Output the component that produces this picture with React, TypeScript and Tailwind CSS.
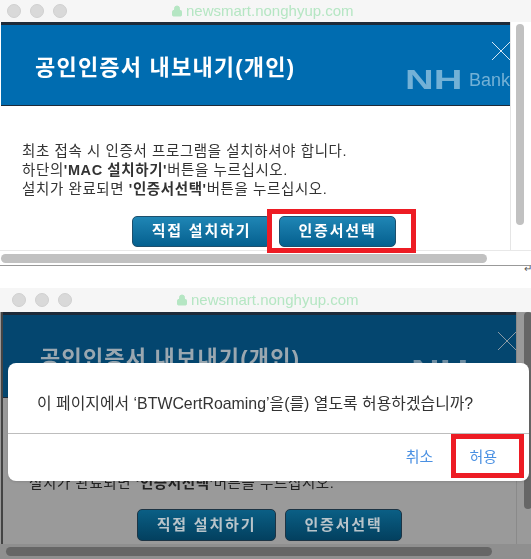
import React from "react";
import { Lock } from "lucide-react";

const font = { fontFamily: '"Liberation Sans", "Noto Sans CJK KR", sans-serif' };

function TitleBar({ dimmed }: { dimmed?: boolean }) {
	return (
		<div className={`flex items-center shrink-0 bg-[#f6f6f6] gap-[9px] ${dimmed ? "h-[24px] pl-[12px]" : "h-[22px] pl-[7px]"}`}>
			<span className="w-[14px] h-[14px] rounded-full bg-[#d9d9d9] border border-[#d0d0d0]" />
			<span className="w-[14px] h-[14px] rounded-full bg-[#d9d9d9] border border-[#d0d0d0]" />
			<span className="w-[14px] h-[14px] rounded-full bg-[#d9d9d9] border border-[#d0d0d0]" />
			<div className="flex items-center gap-[3px] ml-[95px] text-[15px] text-[#b5e6c3]">
				<Lock size={12} fill="#b5e6c3" strokeWidth={2} />
				newsmart.nonghyup.com
			</div>
		</div>
	);
}

function ActionButton({ label, dimmed, width }: { label: string; dimmed?: boolean; width: string }) {
	return (
		<button
			className={`rounded-[5px] border text-[15px] font-bold tracking-[1.8px] ${width} ${
				dimmed
					? "h-[32px] border-[#1d3444] bg-gradient-to-b from-[#0b5f85] to-[#03405f] text-[#b9c4ca]"
					: "h-[31px] border-[#1d4f6c] bg-gradient-to-b from-[#1f86b5] to-[#04608f] text-white"
			}`}
		>
			{label}
		</button>
	);
}

function Shot({ dimmed }: { dimmed?: boolean }) {
	return (
		<div className={`flex flex-col blur-[0.4px] ${dimmed ? "h-[271px] bg-[#9a9a9a]" : "h-[266px] bg-white"}`}>
			<TitleBar dimmed={dimmed} />
			<div className="flex flex-1 min-h-0">
				<div className={`flex flex-col flex-1 min-w-0 ${dimmed ? "ml-[1px] border-l-2 border-[#444]" : "ml-[1px]"}`}>
					<div
						className={`relative shrink-0 flex items-center border-t-[3px] border-b border-[#1e2a38] ${
							dimmed ? "h-[86px] pl-[37px] pt-[4px] bg-[#04466f]" : "h-[84px] pl-[34px] pt-[4px] bg-[#006cb0]"
						}`}
					>
						<h1 className={`text-[22px] font-bold tracking-[1.2px] ${dimmed ? "text-[#9aa7b0]" : "text-white"}`}>
							공인인증서 내보내기(개인)
						</h1>
						<svg className="absolute right-0 top-[17px]" width="18" height="18" viewBox="0 0 18 18" fill="none" stroke={dimmed ? "#8a9aa6" : "#d5e6f2"} strokeWidth="1">
							<path d="M0 0 L18 18 M18 0 L0 18" />
						</svg>
						<div className={`absolute right-0 top-[45px] w-[105px] h-[20px] flex items-center whitespace-nowrap ${dimmed ? "text-[#6f8ea3]" : "text-[#73b1d6]"}`}>
							<span className="w-[64px] shrink-0 text-[28px] font-bold leading-none scale-x-[1.42] origin-left">NH</span>
							<span className="text-[18px] leading-none">Bank</span>
						</div>
					</div>
					<div className={`flex-1 flex flex-col min-h-0 overflow-hidden ${dimmed ? "pt-[38px] pl-[26px]" : "pt-[36px] pl-[21px]"}`}>
						<div className={`text-[14.5px] leading-[19px] tracking-[0.6px] whitespace-nowrap ${dimmed ? "text-[#222]" : "text-[#333]"}`}>
							<p>최초 접속 시 인증서 프로그램을 설치하셔야 합니다.</p>
							<p>
								하단의<b>'MAC 설치하기'</b>버튼을 누르십시오.
							</p>
							<p>
								설치가 완료되면 <b>'인증서선택'</b>버튼을 누르십시오.
							</p>
						</div>
						<div className={`flex ${dimmed ? "gap-[9px] ml-[108px] mt-[16px]" : "gap-[8px] ml-[110px] mt-[17px]"}`}>
							<ActionButton label="직접 설치하기" dimmed={dimmed} width="w-[139px]" />
							<ActionButton label="인증서선택" dimmed={dimmed} width="w-[117px]" />
						</div>
					</div>
				</div>
				<div className={`shrink-0 ${dimmed ? "w-[15px] pl-[7px] pb-[35px] border-l border-[#8a8a8a]" : "w-[21px] pl-[5px] pr-[8px] pt-[2px] pb-[25px] border-l border-[#e5e5e5]"}`}>
					<div className={`w-[8px] h-full rounded-full ${dimmed ? "bg-[#666]" : "bg-[#c1c1c1]"}`} />
				</div>
			</div>
			<div className={`shrink-0 flex items-center ${dimmed ? "h-[15px] pl-[6px] bg-[#8f8f8f]" : "h-[16px] pl-[1px] border-t border-[#e8e8e8] border-b border-b-[#999]"}`}>
				<div className="h-[9px] w-[486px] rounded-full bg-[#c1c1c1]" style={dimmed ? { backgroundColor: "#666" } : undefined} />
			</div>
		</div>
	);
}

export default function App() {
	return (
		<div className="relative w-[531px] h-[559px] overflow-hidden bg-white" style={font}>
			<Shot />
			<div className="h-[22px]" />
			<Shot dimmed />

			{/* first highlight */}
			<div className="absolute left-[267px] top-[209px] w-[149px] h-[44px] border-[5px] border-[#ed1c24]" />
			<span className="absolute left-[524px] top-[261px] text-[10px] text-[#555]">↵</span>

			{/* permission dialog */}
			<div className="absolute left-[8px] top-[363px] w-[521px] h-[118px] rounded-[8px] bg-white flex flex-col shadow-sm blur-[0.4px]">
				<div className="h-[71px] flex items-center pt-[12px] pl-[29px] text-[15.9px] text-[#333] border-b border-[#bdbdbd]">
					이 페이지에서 ‘BTWCertRoaming’을(를) 열도록 허용하겠습니까?
				</div>
				<div className="flex-1 flex items-center justify-end gap-[35px] pr-[32px] text-[15px] text-[#4a90e2]">
					<span className="mr-[1px]">취소</span>
					<span>허용</span>
				</div>
			</div>

			{/* second highlight */}
			<div className="absolute left-[451px] top-[434px] w-[73px] h-[44px] border-[5px] border-[#ed1c24]" />
		</div>
	);
}
